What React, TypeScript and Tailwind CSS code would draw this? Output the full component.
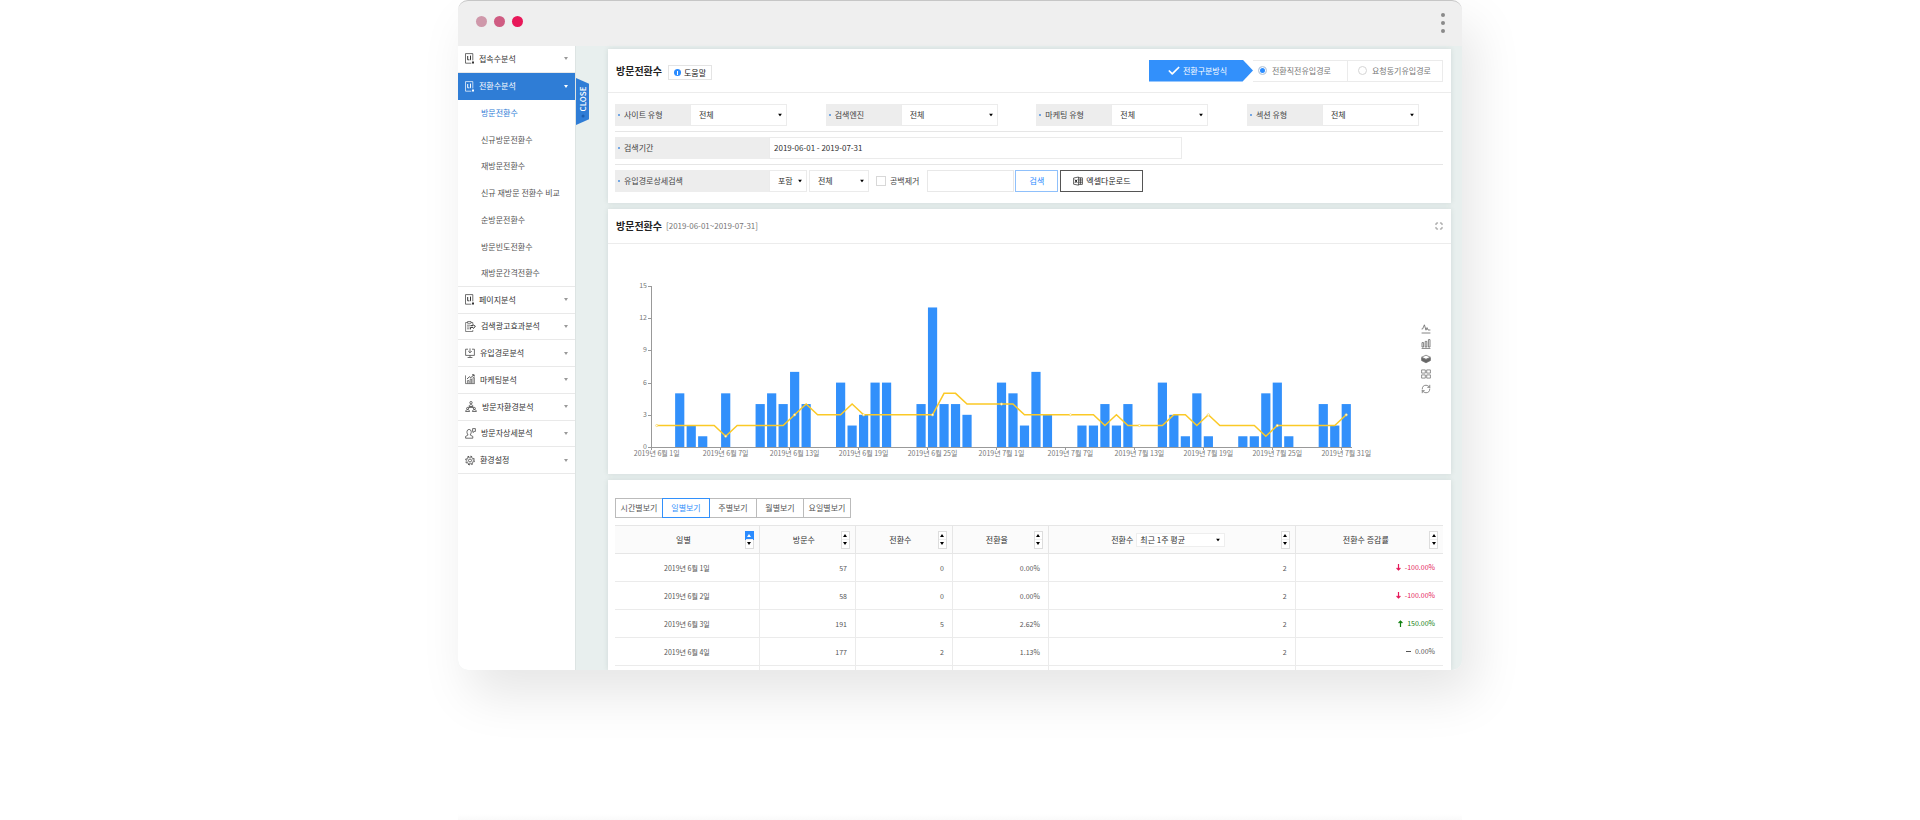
import { useState } from 'react'
import type { ReactNode } from 'react'
import { Check, Maximize, RefreshCw } from 'lucide-react'

const DocIcon = () => (
  <svg width="9" height="11" viewBox="0 0 9 11" fill="none" stroke="currentColor" strokeWidth="0.7">
    <path d="M7.8 7.4V0.6H0.5V10.2H6.3" />
    <path d="M2.7 3V6.8H3.9M5.5 2.6V6.8H4.6" strokeWidth="1" />
    <path d="M7 8.6H9V10.6H7Z" fill="currentColor" stroke="none" />
  </svg>
)

const ClipboardIcon = () => (
  <svg width="11" height="11" viewBox="0 0 11 11" fill="none" stroke="currentColor" strokeWidth="0.6">
    <path d="M2.6 1.5H0.6V10.5H7.8V9M6 1.5H7.8V3.2" />
    <path d="M2.6 0.5H6V2.3H2.6ZM2 4.2H5M2 6H4.6M2 7.8H4.4" />
    <path d="M5.4 4.6H8M7.6 3.4L10.4 5.4L8 7.6M5.4 8.4V6.4H8" strokeWidth="1" />
  </svg>
)

const MonitorIcon = () => (
  <svg width="10" height="11" viewBox="0 0 10 11" fill="none" stroke="currentColor" strokeWidth="0.7">
    <path d="M3 1.2H0.6V7.4H9.4V1.2H7" />
    <path d="M5 0.4V4.6M3.2 3L5 4.8L6.8 3M5 7.4V9.2M2.6 9.5H7.4" />
  </svg>
)

const GrowthIcon = () => (
  <svg width="10" height="11" viewBox="0 0 10 11" fill="none" stroke="currentColor" strokeWidth="0.6">
    <path d="M0.5 1.4V9.6H9.8" />
    <path d="M2.4 9.4V6.6H4V9.4M5.2 9.4V5H6.6V9.4M8 9.4V3.6H9.4V9.4" />
    <path d="M2 5L4.4 2.8L5.8 3.6L9 0.9M7 0.8H9.2V2.6" strokeWidth="0.8" />
  </svg>
)

const GroupIcon = () => (
  <svg width="12" height="11" viewBox="0 0 12 11" fill="none" stroke="currentColor" strokeWidth="0.7">
    <circle cx="6" cy="1.7" r="1.2" />
    <path d="M4 5.6C4 3 8 3 8 5.6ZM6 5.6V7M3 7L6 6L9 7" />
    <circle cx="2.6" cy="7.4" r="1" />
    <circle cx="9.4" cy="7.4" r="1" />
    <path d="M0.6 10.5C0.6 8 4.6 8 4.6 10.5ZM7.4 10.5C7.4 8 11.4 8 11.4 10.5Z" />
  </svg>
)

const PersonIcon = () => (
  <svg width="11" height="11" viewBox="0 0 11 11" fill="none" stroke="currentColor" strokeWidth="0.7">
    <path d="M2.6 6.4C1.4 4.4 1.8 1.4 4.1 1.4C6.4 1.4 6.8 4.4 5.6 6.4" />
    <path d="M2.8 6.2V7.2L0.6 8.4V10.2H7.8V8.4L5.4 7.2V6.2" />
    <path d="M7.6 0.6H10.4V3.4H9.2L8.2 4.6V3.4H7.6Z" />
  </svg>
)

const GearIcon = () => (
  <svg width="10" height="11" viewBox="0 0 10 11" fill="none" stroke="currentColor">
    <circle cx="5" cy="5.5" r="4.3" strokeWidth="1" strokeDasharray="1.7 1.68" />
    <circle cx="5" cy="5.5" r="3.4" strokeWidth="0.6" />
    <circle cx="5" cy="5.5" r="1.5" strokeWidth="0.7" />
  </svg>
)

const ExcelIcon = () => (
  <svg width="10" height="10" viewBox="0 0 10 10" fill="none" stroke="currentColor" strokeWidth="0.7">
    <path d="M5.6 1L0.6 2V8.2L5.6 9.2Z" />
    <path d="M5.6 1.8H9.4V8.4H5.6M7.4 1.8V8.4M5.6 4H9.4M5.6 6.2H9.4" />
    <path d="M2 3.6L4.2 6.8M4.2 3.6L2 6.8" strokeWidth="1" />
  </svg>
)

const Triangle = ({ up, className = '' }: { up?: boolean; className?: string }) => (
  <svg width="4" height="3" viewBox="0 0 4 3" fill="currentColor" className={className}>
    <path d={up ? 'M0 3H4L2 0Z' : 'M0 0H4L2 3Z'} />
  </svg>
)

interface MenuEntry {
  label: string
  icon: ReactNode
  children?: string[]
}

const menu: MenuEntry[] = [
  { label: '접속수분석', icon: <DocIcon /> },
  {
    label: '전환수분석',
    icon: <DocIcon />,
    children: [
      '방문전환수',
      '신규방문전환수',
      '재방문전환수',
      '신규 재방문 전환수 비교',
      '순방문전환수',
      '방문빈도전환수',
      '재방문간격전환수',
    ],
  },
  { label: '페이지분석', icon: <DocIcon /> },
  { label: '검색광고효과분석', icon: <ClipboardIcon /> },
  { label: '유입경로분석', icon: <MonitorIcon /> },
  { label: '마케팅분석', icon: <GrowthIcon /> },
  { label: '방문자환경분석', icon: <GroupIcon /> },
  { label: '방문자상세분석', icon: <PersonIcon /> },
  { label: '환경설정', icon: <GearIcon /> },
]

const bars = [
  0, 0, 5, 2, 1, 0, 5, 0, 0, 4, 5, 4, 7, 4, 0, 0, 6, 2, 3, 6, 6, 0, 0, 4, 13, 4, 4, 3, 0, 0,
  6, 5, 2, 7, 3, 0, 0, 2, 2, 4, 2, 4, 0, 0, 6, 3, 1, 5, 1, 0, 0, 1, 1, 5, 6, 1, 0, 0, 4, 2, 4,
]

const average = [
  2, 2, 2, 2, 2, 2, 1, 2, 2, 2, 2, 2, 3, 4, 3, 3, 3, 4, 3, 3, 3, 3, 3, 3, 3, 5, 5, 4, 4, 4,
  4, 4, 3, 3, 3, 3, 3, 3, 3, 2, 3, 2, 2, 2, 2, 3, 3, 2, 3, 2, 2, 2, 2, 1, 2, 2, 2, 2, 2, 2, 3,
]

const rows = [
  { date: '2019년 6월 1일', visits: 57, conv: 0, rate: '0.00%', avg: 2, dir: 'down', diff: '-100.00%' },
  { date: '2019년 6월 2일', visits: 58, conv: 0, rate: '0.00%', avg: 2, dir: 'down', diff: '-100.00%' },
  { date: '2019년 6월 3일', visits: 191, conv: 5, rate: '2.62%', avg: 2, dir: 'up', diff: '150.00%' },
  { date: '2019년 6월 4일', visits: 177, conv: 2, rate: '1.13%', avg: 2, dir: 'flat', diff: '0.00%' },
]

function Sidebar() {
  return (
    <nav className="w-[118px] shrink-0 bg-white border-r border-[#dde4e3]">
      <ul className="grid auto-rows-fr h-[428px]">
        {menu.map(item => {
          const open = !!item.children
          return [
            <li key={item.label} className={open ? 'bg-[#2f7dd6] text-white' : 'border-b border-[#e9e9e9] text-[#333]'}>
              <a href="#" className="flex items-center h-full pl-[7px] pr-[7px] gap-[5px]">
                {item.icon}
                <span className="flex-1">{item.label}</span>
                <Triangle className={open ? '' : 'text-[#999]'} />
              </a>
            </li>,
            ...(item.children ?? []).map((label, i, all) => (
              <li key={label} className={i === all.length - 1 ? 'border-b border-[#e9e9e9]' : ''}>
                <a href="#" className={`flex items-center h-full pl-[23px] ${i === 0 ? 'text-[#2f7dd6]' : 'text-[#555]'}`}>
                  {label}
                </a>
              </li>
            )),
          ]
        })}
      </ul>
    </nav>
  )
}

function Dropdown({ label, value, className = '' }: { label: string; value: string; className?: string }) {
  return (
    <span className={`relative flex h-full ${className}`}>
      <select aria-label={label} className="w-full h-full appearance-none bg-transparent pl-2 text-[#333] outline-none">
        <option>{value}</option>
      </select>
      <Triangle className="absolute right-1 top-1/2 -translate-y-1/2 text-black pointer-events-none" />
    </span>
  )
}

function FieldLabel({ children, className = '' }: { children: string; className?: string }) {
  return (
    <span className={`flex items-center gap-1 h-full bg-[#ededed] pl-[3px] text-[#444] ${className}`}>
      <span className="w-[2px] h-[2px] rounded-full bg-[#4b8fe0]" />
      {children}
    </span>
  )
}

function FilterCard() {
  const [step, setStep] = useState('전환직전유입경로')
  return (
    <section className="bg-white shadow-[0_0_5px_rgba(60,90,85,0.14)]">
      <header className="flex items-center h-11 pl-2 pr-2 border-b border-[#ececec]">
        <h1 className="text-[10px] font-bold text-[#222]">방문전환수</h1>
        <button className="flex items-center gap-[3px] h-[15px] mt-1 ml-[6px] px-[5px] border border-[#e4e4e4] text-[#222]">
          <span className="flex items-center justify-center w-[7px] h-[7px] rounded-full bg-[#2b8cff]">
            <span className="w-px h-[4px] bg-white" />
          </span>
          도움말
        </button>
        <div className="flex h-[22px] ml-auto">
          <div className="flex items-center justify-center gap-[2px] w-[104px] pr-2 bg-[#3290fb] text-white [clip-path:polygon(0_0,90%_0,100%_50%,90%_100%,0_100%)]">
            <Check size={14} strokeWidth={3} />
            전환구분방식
          </div>
          {['전환직전유입경로', '요청동기유입경로'].map(name => (
            <label key={name} className="flex items-center gap-[5px] px-[5px] w-[95px] border-y border-r border-[#ebebeb] text-[#777] whitespace-nowrap last:px-[10px]">
              <input
                type="radio"
                name="step"
                checked={step === name}
                onChange={() => setStep(name)}
                className="appearance-none w-[9px] h-[9px] shrink-0 rounded-full border border-[#d5d5d5] bg-white checked:bg-[#2b8cff] checked:shadow-[inset_0_0_0_1px_white]"
              />
              {name}
            </label>
          ))}
        </div>
      </header>

      <div className="pt-[11px] pb-[11px] pl-[7px] pr-2">
        <div className="flex justify-between pr-6 h-[22px]">
          {['사이트 유형', '검색엔진', '마케팅 유형', '섹션 유형'].map(name => (
            <div key={name} className="flex w-[172px]">
              <FieldLabel className="w-[75px]">{name}</FieldLabel>
              <Dropdown label={name} value="전체" className="flex-1 border border-[#ececec]" />
            </div>
          ))}
        </div>
        <div className="my-[5px] border-t border-[#e6e6e6]" />
        <div className="flex h-[22px]">
          <FieldLabel className="w-[154px]">검색기간</FieldLabel>
          <input aria-label="검색기간" defaultValue="2019-06-01 - 2019-07-31" className="w-[413px] border border-[#ebebeb] px-1 text-[#333] outline-none" />
        </div>
        <div className="my-[5px] border-t border-[#e6e6e6]" />
        <div className="flex items-center h-[22px]">
          <FieldLabel className="w-[154px]">유입경로상세검색</FieldLabel>
          <Dropdown label="조건" value="포함" className="w-[38px] border border-[#ebebeb]" />
          <Dropdown label="경로" value="전체" className="w-[60px] ml-[2px] border border-[#ebebeb]" />
          <label className="flex items-center gap-1 ml-[7px] text-[#444]">
            <input type="checkbox" className="appearance-none w-[10px] h-[10px] border border-[#d8d8d8] checked:bg-[#2b8cff]" />
            공백제거
          </label>
          <input aria-label="검색어" className="w-[87px] h-full ml-2 border border-[#e8e8e8] px-1 outline-none" />
          <button className="w-[43px] h-full ml-px border border-[#8fc0fb] text-[#2b8cff]">검색</button>
          <button className="flex items-center justify-center gap-[3px] w-[83px] h-full ml-[2px] border border-[#555] text-[#222]">
            <ExcelIcon />
            엑셀다운로드
          </button>
        </div>
      </div>
    </section>
  )
}

const LEFT = 43
const BASE = 203
const STEP = 701 / 61
const UNIT = 161 / 15

const xOf = (i: number) => LEFT + STEP * (i + 0.5)
const yOf = (v: number) => BASE - UNIT * v

const dayLabel = (i: number) => (i < 30 ? `2019년 6월 ${i + 1}일` : `2019년 7월 ${i - 29}일`)

function Chart() {
  const marks = average.map((v, i) => ({ v, i })).filter(m => m.i % 6 === 0)
  return (
    <svg viewBox="0 0 802 230" className="flex-1 min-w-0 text-[7px]" role="img" aria-label="방문전환수">
      <g stroke="#999" strokeWidth="1" shapeRendering="crispEdges">
        <path d={`M${LEFT + 0.5} 42V${BASE + 0.5}H744`} fill="none" />
        {[0, 3, 6, 9, 12, 15].map(v => (
          <path key={v} d={`M${LEFT - 3} ${Math.round(yOf(v)) + 0.5}H${LEFT}`} />
        ))}
        {marks.map(m => (
          <path key={m.i} d={`M${Math.round(LEFT + STEP * m.i) + 0.5} ${BASE}V${BASE + 3}`} />
        ))}
      </g>
      <g fill="#777" textAnchor="end">
        {[0, 3, 6, 9, 12, 15].map(v => (
          <text key={v} x={LEFT - 4} y={Math.round(yOf(v)) + 2}>{v}</text>
        ))}
      </g>
      <g fill="#3290fb">
        {bars.map((v, i) => v > 0 && (
          <rect key={i} x={xOf(i) - 4.6} y={yOf(v)} width="9.2" height={UNIT * v} />
        ))}
      </g>
      <polyline
        points={average.map((v, i) => `${xOf(i)},${yOf(v)}`).join(' ')}
        fill="none"
        stroke="#fbc926"
        strokeWidth="1.5"
      />
      <g fill="#fff" stroke="#fbd65a" strokeWidth="0.7">
        {marks.map(m => <circle key={m.i} cx={xOf(m.i)} cy={yOf(m.v)} r="1.1" />)}
      </g>
      <g fill="#777" textAnchor="middle">
        {marks.map(m => <text key={m.i} x={xOf(m.i)} y={BASE + 9}>{dayLabel(m.i)}</text>)}
      </g>
    </svg>
  )
}

const tools = [
  {
    name: '선 그래프',
    icon: (
      <svg width="10" height="10" viewBox="0 0 10 10" fill="none" stroke="currentColor" strokeWidth="0.8">
        <path d="M0.6 5H1.6L3.4 0.8L5 6.2L6 3.6L7 6H9.4M0.6 9H9.4" />
      </svg>
    ),
  },
  {
    name: '막대 그래프',
    icon: (
      <svg width="10" height="10" viewBox="0 0 10 10" fill="none" stroke="currentColor" strokeWidth="0.8">
        <path d="M1 8V3.6H2.6V8ZM4.2 8V2.4H5.8V8ZM7.4 8V0.6H9V8ZM0.6 9.4H9.4" />
      </svg>
    ),
  },
  {
    name: '누적',
    icon: (
      <svg width="10" height="10" viewBox="0 0 10 10" stroke="currentColor" strokeWidth="0.7">
        <path d="M5 1.2L9.4 3.2L5 5.2L0.6 3.2Z" fill="none" />
        <path d="M0.6 3.8L5 5.8L9.4 3.8V6.6L5 8.8L0.6 6.6Z" fill="currentColor" />
      </svg>
    ),
  },
  {
    name: '타일',
    icon: (
      <svg width="10" height="10" viewBox="0 0 10 10" fill="none" stroke="currentColor" strokeWidth="0.7">
        <path d="M0.6 0.9H4.3V4.1H0.6ZM5.7 0.9H9.4V4.1H5.7ZM0.6 5.9H4.3V9.1H0.6ZM5.7 5.9H9.4V9.1H5.7Z" />
      </svg>
    ),
  },
  { name: '새로고침', icon: <RefreshCw size={10} strokeWidth={1.8} /> },
]

function ChartCard() {
  return (
    <section className="bg-white shadow-[0_0_5px_rgba(60,90,85,0.14)]">
      <header className="flex items-center h-[35px] pl-2 pr-2 border-b border-[#ececec]">
        <h2 className="text-[10px] font-bold text-[#222]">방문전환수</h2>
        <span className="ml-1 text-[#777]">[2019-06-01~2019-07-31]</span>
        <button aria-label="전체화면" className="ml-auto text-[#777]">
          <Maximize size={8} strokeWidth={2.5} />
        </button>
      </header>
      <div className="flex items-start">
        <Chart />
        <div className="flex flex-col items-center gap-[5px] w-8 mr-[9px] pt-20 text-[#666]">
          {tools.map(t => (
            <button key={t.name} aria-label={t.name} className="h-[10px]">{t.icon}</button>
          ))}
        </div>
      </div>
    </section>
  )
}

function SortButtons({ active }: { active?: boolean }) {
  return (
    <span className="flex flex-col w-[9px] h-[18px] shrink-0 border border-[#ddd] bg-white text-black">
      <button aria-label="오름차순" className={`flex flex-1 items-center justify-center ${active ? 'bg-[#2b8cff] text-white outline outline-[#2b8cff]' : ''}`}>
        <Triangle up />
      </button>
      <button aria-label="내림차순" className="flex flex-1 items-center justify-center border-t border-[#eee]">
        <Triangle />
      </button>
    </span>
  )
}

const Diff = ({ dir, value }: { dir: string; value: string }) => (
  <span className={`inline-flex items-center gap-1 ${dir === 'down' ? 'text-[#e5195a]' : dir === 'up' ? 'text-[#118011]' : 'text-[#555]'}`}>
    <svg width="5" height="7" viewBox="0 0 5 7" fill="none" stroke="currentColor" strokeWidth="1.2">
      {dir === 'down' && <path d="M2.5 0V6M0.6 4L2.5 6L4.4 4" />}
      {dir === 'up' && <path d="M2.5 7V1M0.6 3L2.5 1L4.4 3" />}
      {dir === 'flat' && <path d="M0 3.5H5" />}
    </svg>
    {value}
  </span>
)

function TableCard() {
  const [tab, setTab] = useState('일별보기')
  const heads = ['일별', '방문수', '전환수', '전환율', '전환수', '전환수 증감률']
  const cell = 'h-7 border-b border-r border-[#ebebeb] last:border-r-0 pr-2 text-right'
  return (
    <section className="bg-white pt-[18px] pl-[7px] pr-2 shadow-[0_0_5px_rgba(60,90,85,0.14)]">
      <div className="flex h-5 pl-px">
        {['시간별보기', '일별보기', '주별보기', '월별보기', '요일별보기'].map(t => (
          <button
            key={t}
            onClick={() => setTab(t)}
            className={`w-12 -ml-px border ${tab === t ? 'relative border-[#3290fb] text-[#3290fb]' : 'border-[#bbb] text-[#555]'}`}
          >
            {t}
          </button>
        ))}
      </div>
      <table className="w-full mt-[7px] table-fixed border-separate border-spacing-0 text-[7px] text-[#555]">
        <colgroup>
          <col className="w-[17.5%]" />
          <col className="w-[11.6%]" />
          <col className="w-[11.7%]" />
          <col className="w-[11.6%]" />
          <col className="w-[29.8%]" />
          <col />
        </colgroup>
        <thead>
          <tr>
            {heads.map((h, i) => (
              <th key={i} className="h-[29px] bg-[#fbfbfb] border-y border-r border-[#e6e6e6] last:border-r-0 pl-[7px] pr-[5px] text-[8px] font-normal text-[#333]">
                <span className="flex items-center">
                  <span className="flex flex-1 items-center justify-center gap-[3px]">
                    {h}
                    {i === 4 && <Dropdown label="평균 기간" value="최근 1주 평균" className="w-[89px] h-[11px] border border-[#eee] bg-white [&>select]:pl-[3px]" />}
                  </span>
                  <SortButtons active={i === 0} />
                </span>
              </th>
            ))}
          </tr>
        </thead>
        <tbody>
          {rows.map(r => (
            <tr key={r.date}>
              <td className="h-7 border-b border-r border-[#ebebeb] text-center">{r.date}</td>
              <td className={cell}>{r.visits}</td>
              <td className={cell}>{r.conv}</td>
              <td className={cell}>{r.rate}</td>
              <td className={cell}>{r.avg}</td>
              <td className={cell}><Diff dir={r.dir} value={r.diff} /></td>
            </tr>
          ))}
          <tr>
            {heads.map((_, i) => <td key={i} className="h-1 border-r border-[#ebebeb] last:border-r-0" />)}
          </tr>
        </tbody>
      </table>
    </section>
  )
}

export default function App() {
  return (
    <div className="flex flex-col min-h-screen bg-white font-['Noto_Sans_CJK_KR',sans-serif] text-[8px] leading-3">
      <div className="w-full max-w-[1004px] mx-auto rounded-[10px] shadow-[12px_25px_50px_rgba(0,0,0,0.1)]">
        <div className="rounded-[10px] overflow-hidden border-t border-[#c6c6c6] bg-[#efefef]">
          {/* Title bar */}
          <div className="flex items-start justify-between h-[45px] pl-[18px] pr-[17px]">
            <div className="flex gap-[7px] pt-[15px]">
              <span className="w-[11px] h-[11px] rounded-full bg-[#cf98aa]" />
              <span className="w-[11px] h-[11px] rounded-full bg-[#cf5c82]" />
              <span className="w-[11px] h-[11px] rounded-full bg-[#e81859]" />
            </div>
            <button aria-label="메뉴" className="flex flex-col gap-1 pt-3">
              <span className="w-1 h-1 rounded-full bg-[#8a8a8a]" />
              <span className="w-1 h-1 rounded-full bg-[#8a8a8a]" />
              <span className="w-1 h-1 rounded-full bg-[#8a8a8a]" />
            </button>
          </div>

          <div className="flex bg-[#e8efee]">
            <Sidebar />
            <main className="relative flex flex-col flex-1 min-w-0 gap-[6px] pt-[3px] pl-8 pr-[11px]">
              <button className="absolute left-0 top-8 flex items-center justify-center w-[13px] h-[47px] bg-[#2f7dd6] text-white [clip-path:polygon(0_0,100%_12%,100%_88%,0_100%)]">
                <span className="flex items-center gap-[3px] -rotate-90 font-medium">
                  <span className="w-[3px] h-[3px] shrink-0 rounded-full bg-[#1c5eb0]" />
                  CLOSE
                </span>
              </button>
              <FilterCard />
              <ChartCard />
              <TableCard />
            </main>
          </div>
        </div>
      </div>
      {/* Upper edge of the next section's shadow */}
      <div className="w-full max-w-[1004px] h-[6px] mx-auto mt-auto bg-linear-to-b from-white to-[#fafafa]" />
    </div>
  )
}
